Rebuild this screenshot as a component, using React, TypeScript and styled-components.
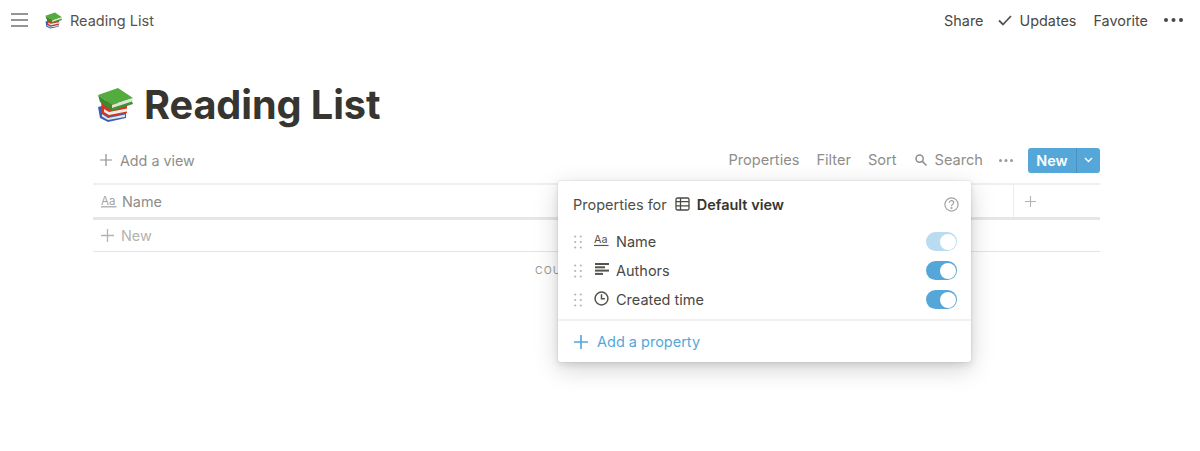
import React from "react";
import styled, { createGlobalStyle } from "styled-components";

const GlobalStyle = createGlobalStyle`
  html, body {
    margin: 0;
    padding: 0;
    background: #fff;
    font-family: Inter, "Liberation Sans", sans-serif;
    color: #37352f;
  }
  * { box-sizing: border-box; }
`;

const Page = styled.div`
  width: 1200px;
  height: 451px;
  overflow: hidden;
  position: relative;
  background: #fff;
`;

const TopBar = styled.header`
  height: 40px;
  display: flex;
  align-items: center;
  justify-content: space-between;
  padding: 0 17px 0 11px;
`;

const TopGroup = styled.div`
  display: flex;
  align-items: center;
`;

const Slot = styled.span<{ $gap: number }>`
  margin-left: ${({ $gap }) => $gap}px;
  display: flex;
  align-items: center;
`;

const Crumb = styled.span`
  margin-left: 8px;
  font-size: 14.5px;
  color: #55534e;
`;

const TopAction = styled.span<{ $gap?: number }>`
  margin-left: ${({ $gap }) => $gap ?? 0}px;
  font-size: 14.4px;
  color: #4a4843;
`;

const Main = styled.main`
  padding: 0 100px 0 93px;
`;

const Title = styled.h1`
  margin: 0;
  height: 105px;
  padding: 40px 0 0 4px;
  display: flex;
  align-items: flex-start;
  font-size: 39.7px;
  line-height: 50px;
  font-weight: 700;
  letter-spacing: -0.1px;
  color: #37352f;
  svg { margin: 7px 11px 0 0; }
`;

const Toolbar = styled.div`
  height: 38px;
  padding: 0 0 8px 7px;
  display: flex;
  align-items: center;
  justify-content: space-between;
  font-size: 14.6px;
  color: #8e8d89;
`;

const ToolGroup = styled.div`
  display: flex;
  align-items: center;
`;

const ToolLabel = styled.span<{ $gap?: number }>`
  margin-left: ${({ $gap }) => $gap ?? 0}px;
`;

const AddView = styled.span`
  margin-left: 8px;
  font-size: 14.3px;
`;

const NewButton = styled.div`
  margin-left: 15px;
  width: 72px;
  height: 25px;
  display: flex;
  border-radius: 3px;
  overflow: hidden;
  background: #54a7d8;
  color: #fff;
  font-weight: 600;
`;

const NewLabel = styled.span`
  width: 48px;
  display: flex;
  align-items: center;
  justify-content: center;
  font-size: 14.4px;
`;

const NewCaret = styled.span`
  flex: 1;
  display: flex;
  align-items: center;
  justify-content: center;
  border-left: 1px solid #4a92bd;
`;

const HeaderRow = styled.div`
  height: 37px;
  display: flex;
  align-items: center;
  justify-content: space-between;
  border-top: 2px solid #efefee;
  border-bottom: 3px solid #e6e6e5;
  font-size: 14.4px;
  color: #8e8d89;
`;

const HeaderCell = styled.div`
  padding-left: 8px;
  display: flex;
  align-items: center;
  gap: 5px;
`;

const AddColumn = styled.div`
  width: 87px;
  height: 100%;
  padding-left: 11px;
  display: flex;
  align-items: center;
  border-left: 1px solid #ededec;
`;

const NewRow = styled.div`
  height: 32px;
  padding-left: 8px;
  display: flex;
  align-items: center;
  gap: 7px;
  border-bottom: 1px solid #e4e4e3;
  font-size: 14.4px;
  color: #b4b3b0;
`;

const CountRow = styled.div`
  height: 36px;
  padding-left: 442px;
  display: flex;
  align-items: center;
  font-size: 10.5px;
  letter-spacing: 1px;
  color: #9a9995;
`;

const Popover = styled.section`
  position: absolute;
  left: 558px;
  top: 181px;
  width: 413px;
  height: 181px;
  background: #fff;
  border-radius: 3px;
  box-shadow: 0 0 0 1px rgba(15, 15, 15, 0.04), 0 3px 7px rgba(15, 15, 15, 0.1),
    0 7px 24px rgba(15, 15, 15, 0.18);
`;

const PopHead = styled.div`
  height: 46px;
  padding: 0 12px 0 15px;
  display: flex;
  align-items: center;
  font-size: 14.5px;
  color: #4f4d48;
  svg:first-of-type { margin: 0 7px 0 8px; }
`;

const ViewName = styled.strong`
  flex: 1;
  font-weight: 600;
  color: #37352f;
`;

const PropList = styled.div`
  height: 94px;
  border-bottom: 2px solid #f2f2f1;
  display: grid;
  grid-auto-rows: 29px;
`;

const PropRow = styled.div`
  padding: 0 14px 0 16px;
  display: flex;
  align-items: center;
  font-size: 14.5px;
  color: #4a4843;
`;

const PropIcon = styled.span`
  width: 15px;
  margin: 0 7px 3px 12px;
  display: flex;
  align-items: center;
  justify-content: center;
`;

const PropName = styled.span`
  flex: 1;
`;

const Toggle = styled.span<{ $muted?: boolean }>`
  width: 31px;
  height: 19px;
  padding: 1.5px;
  display: flex;
  justify-content: flex-end;
  border-radius: 10px;
  background: ${({ $muted }) => ($muted ? "#badcf0" : "#54a7d8")};
  &::after {
    content: "";
    width: 16px;
    height: 16px;
    border-radius: 50%;
    background: #fff;
  }
`;

const AddProperty = styled.div`
  height: 41px;
  padding-left: 16px;
  display: flex;
  align-items: center;
  gap: 9px;
  font-size: 14.5px;
  color: #54a7d8;
`;

const Plus: React.FC<{ size: number; color: string; weight?: number }> = ({
  size,
  color,
  weight = 1.2,
}) => (
  <svg width={size} height={size} viewBox="0 0 12 12" fill="none" stroke={color} strokeWidth={weight}>
    <path d="M6 0v12M0 6h12" />
  </svg>
);

const Dots: React.FC<{ width: number; r: number; color: string }> = ({ width, r, color }) => (
  <svg width={width} height={r * 2 + 2} viewBox={`0 0 ${width} ${r * 2 + 2}`} fill={color}>
    <circle cx={r} cy={r + 1} r={r} />
    <circle cx={width / 2} cy={r + 1} r={r} />
    <circle cx={width - r} cy={r + 1} r={r} />
  </svg>
);

const Books: React.FC<{ size: number }> = ({ size }) => (
  <svg width={size} height={size} viewBox="0 0 36 36">
    <path d="M1 20 L5 19 L29 25 L29 31 L11 35 L3 31 Z" fill="#3b5fb5" />
    <path d="M5 27 L11 31 L28 27.5 L28 30 L11 33 L5 29.5 Z" fill="#e6e4e0" />
    <path d="M4 13 L30 18 L30 26 L11 30 L5 26 Z" fill="#d8341f" />
    <path d="M7 22 L12 25 L30 21.5 L30 24.5 L12 28 L7 25 Z" fill="#efedea" />
    <path d="M1 8 L21 1 L36 11 L15 18 Z" fill="#53ad3e" />
    <path d="M1 8 L15 18 L15 24 L3 15 Z" fill="#3c8a2f" />
    <path d="M15 18 L36 11 L35 15 L15 22 Z" fill="#dfe3d6" />
    <path d="M15 21 L35 14.5 L36 17 L15 24 Z" fill="#3f9233" />
  </svg>
);

const TextIcon: React.FC<{ color: string }> = ({ color }) => (
  <svg width="16" height="13" viewBox="0 0 16 13" fill={color}>
    <text x="0" y="9.5" fontSize="11.5" fontFamily="Inter, sans-serif">Aa</text>
    <rect x="0" y="11.2" width="15.5" height="1.2" />
  </svg>
);

const LinesIcon = () => (
  <svg width="14" height="12" viewBox="0 0 14 12" fill="#55534e">
    <rect width="14" height="2" />
    <rect y="3.3" width="10" height="2" />
    <rect y="6.6" width="14" height="2" />
    <rect y="9.9" width="8" height="2" />
  </svg>
);

const ClockIcon = () => (
  <svg width="15" height="15" viewBox="0 0 14 14" fill="none" stroke="#55534e" strokeWidth="1.4">
    <circle cx="7" cy="7" r="6" />
    <path d="M7 3v4.2h3.2" />
  </svg>
);

const Grip = () => (
  <svg width="8" height="14" viewBox="0 0 8 14" fill="#b5b4b1">
    {[1.5, 7, 12.5].map((y) => (
      <React.Fragment key={y}>
        <circle cx="1.2" cy={y} r="1.1" />
        <circle cx="6.8" cy={y} r="1.1" />
      </React.Fragment>
    ))}
  </svg>
);

const properties = [
  { name: "Name", icon: <TextIcon color="#55534e" />, muted: true },
  { name: "Authors", icon: <LinesIcon />, muted: false },
  { name: "Created time", icon: <ClockIcon />, muted: false },
];

export default function App() {
  return (
    <Page>
      <GlobalStyle />
      <TopBar>
        <TopGroup>
          <svg width="17" height="14" viewBox="0 0 17 14" stroke="#74736f" strokeWidth="1.4">
            <path d="M0 1h17M0 7h17M0 13h17" />
          </svg>
          <Slot $gap={17}>
            <Books size={17} />
          </Slot>
          <Crumb>Reading List</Crumb>
        </TopGroup>
        <TopGroup>
          <TopAction>Share</TopAction>
          <Slot $gap={15}>
            <svg width="14" height="11" viewBox="0 0 14 11" fill="none" stroke="#55534e" strokeWidth="1.8">
              <path d="M1 5.5 L5 9.5 L13 1" />
            </svg>
          </Slot>
          <TopAction $gap={7}>Updates</TopAction>
          <TopAction $gap={17}>Favorite</TopAction>
          <Slot $gap={16}>
            <Dots width={19} r={2} color="#4a4843" />
          </Slot>
        </TopGroup>
      </TopBar>
      <Main>
        <Title>
          <Books size={36} />
          Reading List
        </Title>
        <Toolbar>
          <ToolGroup>
            <Plus size={12} color="#8e8d89" />
            <AddView>Add a view</AddView>
          </ToolGroup>
          <ToolGroup>
            <ToolLabel>Properties</ToolLabel>
            <ToolLabel $gap={17}>Filter</ToolLabel>
            <ToolLabel $gap={17}>Sort</ToolLabel>
            <Slot $gap={18}>
              <svg width="12" height="12" viewBox="0 0 12 12" fill="none" stroke="#8e8d89" strokeWidth="1.5">
                <circle cx="4.6" cy="4.6" r="3.6" />
                <path d="M7.4 7.4 L11.5 11.5" />
              </svg>
            </Slot>
            <ToolLabel $gap={8}>Search</ToolLabel>
            <Slot $gap={16}>
              <Dots width={14} r={1.5} color="#9a9995" />
            </Slot>
            <NewButton>
              <NewLabel>New</NewLabel>
              <NewCaret>
                <svg width="9" height="6" viewBox="0 0 9 6" fill="none" stroke="#fff" strokeWidth="1.4">
                  <path d="M1 1 L4.5 4.5 L8 1" />
                </svg>
              </NewCaret>
            </NewButton>
          </ToolGroup>
        </Toolbar>
        <HeaderRow>
          <HeaderCell>
            <TextIcon color="#a3a29f" />
            Name
          </HeaderCell>
          <AddColumn>
            <Plus size={11} color="#b4b3b0" />
          </AddColumn>
        </HeaderRow>
        <NewRow>
          <Plus size={13} color="#b4b3b0" />
          New
        </NewRow>
        <CountRow>COUNT</CountRow>
      </Main>
      <Popover>
        <PopHead>
          Properties for
          <svg width="15" height="14" viewBox="0 0 15 14" fill="none" stroke="#4a4843" strokeWidth="1.3">
            <rect x="1" y="1" width="13" height="12" rx="1.5" />
            <path d="M1 4.7h13M1 8.8h13M5.5 1v12" />
          </svg>
          <ViewName>Default view</ViewName>
          <svg width="15" height="15" viewBox="0 0 15 15" fill="none" stroke="#a3a29f" strokeWidth="1.2">
            <circle cx="7.5" cy="7.5" r="6.6" />
            <path d="M5.4 5.8c0-3 4.3-2.8 4.3-.1 0 1.7-2.2 1.7-2.2 3.5" />
            <circle cx="7.5" cy="11" r="0.5" />
          </svg>
        </PopHead>
        <PropList>
          {properties.map((p) => (
            <PropRow key={p.name}>
              <Grip />
              <PropIcon>{p.icon}</PropIcon>
              <PropName>{p.name}</PropName>
              <Toggle $muted={p.muted} />
            </PropRow>
          ))}
        </PropList>
        <AddProperty>
          <Plus size={14} color="#54a7d8" weight={1.4} />
          Add a property
        </AddProperty>
      </Popover>
    </Page>
  );
}
